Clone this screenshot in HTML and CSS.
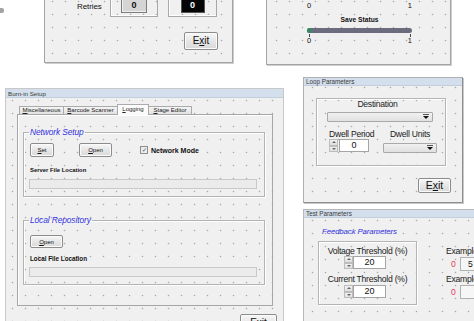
FILE: index.html
```html
<!DOCTYPE html>
<html lang="en">
<head>
    <meta charset="UTF-8">
    <meta name="viewport" content="width=device-width, initial-scale=1.0">
    <title>Burn-in Designer</title>
    <link rel="stylesheet" href="styles.css">
</head>
<body>
    <div class="desk">
        <span class="cursor-bit"></span>

        <!-- retries counters -->
        <div class="win win-counters">
            <div class="counter-row">
                <span class="lbl">Retries</span>
                <div class="frame"><span class="readout">0</span></div>
                <div class="frame frame-wide"><span class="readout readout-dark">0</span></div>
            </div>
            <div class="exit-row">
                <button class="btn btn-exit">E<u>x</u>it</button>
            </div>
        </div>

        <!-- save status gauge -->
        <div class="win win-save">
            <div class="gauge">
                <div class="scale"><span>0</span><span>1</span></div>
                <div class="gauge-title">Save Status</div>
                <div class="bar"><span class="bar-dot"></span></div>
                <div class="ticks"><span></span><span></span></div>
                <div class="scale"><span>0</span><span>1</span></div>
            </div>
        </div>

        <!-- burn-in setup -->
        <div class="win win-burnin">
            <div class="titlebar">Burn-in Setup</div>
            <div class="burnin-body">
                <div class="tabs">
                    <span class="tab tab-misc"><u>M</u>iscellaneous</span>
                    <span class="tab tab-barcode"><u>B</u>arcode Scanner</span>
                    <span class="tab tab-logging active"><u>L</u>ogging</span>
                    <span class="tab tab-stage"><u>S</u>tage Editor</span>
                </div>
                <div class="tab-panel">
                    <fieldset class="group group-network">
                        <legend>Network Setup</legend>
                        <div class="btn-row">
                            <button class="btn btn-set"><u>S</u>et</button>
                            <button class="btn btn-open"><u>O</u>pen</button>
                            <label class="check"><span class="check-box">&#10003;</span>Network Mode</label>
                        </div>
                        <div class="field-lbl lbl-server">Server File Location</div>
                        <div class="textbox"></div>
                    </fieldset>
                    <fieldset class="group group-local">
                        <legend>Local Repository</legend>
                        <button class="btn btn-open btn-local"><u>O</u>pen</button>
                        <div class="field-lbl lbl-local">Local File Location</div>
                        <div class="textbox textbox-local"></div>
                    </fieldset>
                </div>
                <div class="exit-row exit-burnin">
                    <button class="btn btn-exit">E<u>x</u>it</button>
                </div>
            </div>
        </div>

        <!-- loop parameters -->
        <div class="win win-loop">
            <div class="titlebar">Loop Parameters</div>
            <div class="loop-body">
                <div class="box loop-box">
                    <div class="caption dest-lbl">Destination</div>
                    <div class="combo combo-dest"><span class="arrow"></span></div>
                    <div class="dwell-row">
                        <div class="dwell-col">
                            <div class="caption">Dwell Period</div>
                            <div class="spin">
                                <span class="spin-btns"><i class="up"></i><i class="down"></i></span>
                                <span class="spin-val">0</span>
                            </div>
                        </div>
                        <div class="dwell-col dwell-units">
                            <div class="caption">Dwell Units</div>
                            <div class="combo combo-units"><span class="arrow"></span></div>
                        </div>
                    </div>
                </div>
                <div class="exit-row exit-loop">
                    <button class="btn btn-exit">E<u>x</u>it</button>
                </div>
            </div>
        </div>

        <!-- test parameters -->
        <div class="win win-test">
            <div class="titlebar">Test Parameters</div>
            <div class="test-body">
                <div class="feedback-lbl">Feedback Parameters</div>
                <div class="test-row">
                    <div class="box thresh-box">
                        <div class="caption">Voltage Threshold (%)</div>
                        <div class="spin spin-wide">
                            <span class="spin-btns"><i class="up"></i><i class="down"></i></span>
                            <span class="spin-val">20</span>
                        </div>
                        <div class="caption caption-gap">Current Threshold (%)</div>
                        <div class="spin spin-wide">
                            <span class="spin-btns"><i class="up"></i><i class="down"></i></span>
                            <span class="spin-val">20</span>
                        </div>
                    </div>
                    <div class="example-col">
                        <div class="caption">Example</div>
                        <div class="example-line"><span class="red-val">0</span><span class="example-box">5</span></div>
                        <div class="caption caption-gap2">Example</div>
                        <div class="example-line"><span class="red-val">0</span><span class="example-box"></span></div>
                    </div>
                </div>
            </div>
        </div>
    </div>
</body>
</html>
```

FILE: styles.css
```css
/* General Styling */
body {
    margin: 0;
    padding: 0;
    background: #fff;
    font-family: "Liberation Sans", Arial, sans-serif;
    color: #111;
}

.desk {
    position: relative;
    width: 474px;
    height: 321px;
    overflow: hidden;
    background: #fff;
}

.cursor-bit {
    position: absolute;
    left: 0;
    top: 8px;
    width: 4px;
    height: 5px;
    background: #a4a4a4;
    border-radius: 0 2px 2px 0;
}

/* designer windows, placed on a free canvas */
.win {
    position: absolute;
    box-sizing: border-box;
    background-color: #f0f0f0;
    background-image: radial-gradient(circle, #a9a9a9 0.6px, transparent 1.1px);
    background-size: 13px 13px;
    border: 1px solid #b9b9b9;
}

.titlebar {
    background: #d3dfec;
    color: #3a3a3a;
    font-size: 6.3px;
    padding-left: 2px;
    border-bottom: 1px solid #c2cedb;
}

.btn {
    box-sizing: border-box;
    padding: 0;
    border: 1px solid #8c8c8c;
    border-radius: 2px;
    background: linear-gradient(#f7f7f7, #e6e6e6 50%, #d9d9d9);
    font-family: "Liberation Sans", Arial, sans-serif;
    color: #111;
    line-height: 1;
    box-shadow: inset 0 0 0 1px #fbfbfb;
}

.btn-exit {
    width: 34px;
    height: 18px;
    font-size: 10px;
}

.exit-row {
    display: flex;
    justify-content: flex-end;
}

.caption {
    font-size: 8.6px;
    line-height: 8px;
    letter-spacing: -0.25px;
    text-align: center;
    white-space: nowrap;
    color: #1a1a1a;
}

/* Retries window */
.win-counters {
    left: 44px;
    top: -8px;
    width: 189px;
    height: 71px;
    background-position: 1px 2px;
    border-color: #a4a4a4;
    box-shadow: 1px 1px 0 #cfcfcf;
}

.counter-row {
    display: flex;
    align-items: center;
    height: 24px;
    padding-left: 32px;
}

.lbl {
    width: 25px;
    margin-right: 8px;
    font-size: 8px;
    letter-spacing: -0.1px;
    padding-top: 3px;
}

.frame {
    box-sizing: border-box;
    width: 48px;
    height: 24px;
    margin-right: 10px;
    border: 1px solid #a8a8a8;
    border-top: none;
    box-shadow: inset 1px -1px 0 #fff;
    display: flex;
    justify-content: center;
    align-items: flex-end;
    padding-bottom: 3px;
}

.frame-wide {
    width: 49px;
}

.readout {
    box-sizing: border-box;
    width: 26px;
    height: 16px;
    background: #d5d5d5;
    border: 1px solid #7c7c7c;
    border-top: none;
    box-shadow: inset 1px -1px 0 #efefef;
    font-size: 9px;
    font-weight: bold;
    text-align: center;
    line-height: 17px;
}

.readout-dark {
    width: 24px;
    background: #050505;
    color: #fff;
    border-color: #555;
    box-shadow: none;
}

.win-counters .exit-row {
    margin-top: 15px;
    padding-right: 14px;
}

/* Save status window */
.win-save {
    left: 266px;
    top: -8px;
    width: 185px;
    height: 73px;
    background-position: 3px 2px;
    border-color: #a4a4a4;
    box-shadow: 1px 1px 0 #cfcfcf;
}

.gauge {
    width: 105px;
    margin-left: 40px;
    padding-top: 9px;
}

.scale {
    display: flex;
    justify-content: space-between;
    font-size: 7.5px;
    line-height: 8px;
}

.gauge-title {
    margin-top: 6px;
    font-size: 6.7px;
    font-weight: bold;
    line-height: 8px;
    text-align: center;
}

.bar {
    position: relative;
    height: 5px;
    margin-top: 4px;
    background: #6c6c7f;
    border-radius: 3px;
}

.bar-dot {
    position: absolute;
    left: 0;
    top: 0;
    width: 4px;
    height: 5px;
    border-radius: 3px 0 0 3px;
    background: #2e8d5f;
}

.ticks {
    display: flex;
    justify-content: space-between;
    height: 3px;
    margin-top: 1px;
    padding: 0 1px 0 2px;
}

.ticks span {
    width: 1px;
    background: #444;
}

/* Burn-in setup window */
.win-burnin {
    left: 5px;
    top: 88px;
    width: 279px;
    height: 260px;
    background-position: 0 5px;
    border-color: #c8c8c8;
}

.win-burnin .titlebar {
    height: 8px;
    line-height: 9px;
    font-size: 6.2px;
}

.burnin-body {
    padding: 6px 10px 0 11px;
}

.tabs {
    display: flex;
    align-items: flex-end;
    height: 10px;
    padding-left: 2px;
}

.tab {
    box-sizing: border-box;
    height: 8px;
    margin-right: -1px;
    border: 1px solid #ababab;
    border-bottom: none;
    background: linear-gradient(#f4f4f4, #e2e2e2);
    font-size: 6px;
    line-height: 7px;
    text-align: center;
    color: #222;
}

.tab-misc { width: 45px; }
.tab-barcode { width: 55px; }
.tab-logging { width: 32px; }
.tab-stage { width: 44px; }

.tab.active {
    position: relative;
    height: 11px;
    margin-bottom: -1px;
    background: #fbfbfb;
    line-height: 9px;
    z-index: 1;
}

.tab-panel {
    box-sizing: border-box;
    width: 256px;
    height: 192px;
    padding: 12px 0 0 5px;
    border: 1px solid #a6a6a6;
    box-shadow: inset 1px 1px 0 #fff;
}

.group {
    box-sizing: border-box;
    width: 242px;
    margin: 0;
    padding: 0;
    min-width: 0;
    border: 1px solid #b3b3b3;
    box-shadow: inset 1px 1px 0 #fff, 1px 1px 0 #fff;
}

.group legend {
    margin-left: 5px;
    padding: 0 1px;
    font-size: 8.4px;
    line-height: 10px;
    font-style: italic;
    color: #2f2fdc;
    letter-spacing: -0.1px;
}

.btn-row {
    display: flex;
    align-items: center;
    margin-top: 6px;
    padding-left: 6px;
}

.btn-set,
.btn-open {
    height: 14px;
    font-size: 6px;
}

.btn-set {
    width: 24px;
    margin-right: 25px;
}

.btn-open {
    width: 33px;
    margin-right: 28px;
}

.check {
    display: flex;
    align-items: center;
    font-size: 7px;
    font-weight: bold;
}

.check-box {
    box-sizing: border-box;
    width: 8px;
    height: 8px;
    margin-right: 3px;
    border: 1px solid #8e8e8e;
    background: #ececec;
    font-size: 6px;
    line-height: 6px;
    text-align: center;
    color: #4a4a4a;
    font-weight: normal;
}

.field-lbl {
    padding-left: 6px;
    font-weight: bold;
    line-height: 8px;
}

.lbl-server {
    margin-top: 9px;
    font-size: 5.9px;
}

.textbox {
    box-sizing: border-box;
    width: 228px;
    height: 10px;
    margin: 5px 0 7px 5px;
    background: #ebebeb;
    border: 1px solid #c9c9c9;
}

.group-local {
    margin-top: 18px;
}

.btn-local {
    display: block;
    height: 13px;
    margin: 10px 0 0 6px;
}

.lbl-local {
    margin-top: 7px;
    font-size: 6.3px;
}

.textbox-local {
    margin-top: 4px;
}

.exit-burnin {
    margin-top: 8px;
    margin-right: -4px;
}

.exit-burnin .btn-exit {
    width: 37px;
}

/* Loop parameters window */
.win-loop {
    left: 303px;
    top: 77px;
    width: 160px;
    height: 126px;
    background-position: 2px 3px;
    border-color: #b0b0b0;
    border-right-color: #8e8e8e;
    border-bottom-color: #8e8e8e;
    box-shadow: 1px 1px 0 #c9c9c9;
}

.win-loop .titlebar,
.win-test .titlebar {
    height: 7px;
    line-height: 8px;
}

.loop-body {
    padding: 12px 11px 0 12px;
}

.box {
    box-sizing: border-box;
    border: 1px solid #b4b4b4;
    box-shadow: inset 1px 1px 0 #fff, 1px 1px 0 #fff;
}

.loop-box {
    width: 130px;
    height: 68px;
    padding-top: 1px;
}

.dest-lbl {
    padding-right: 7px;
}

.combo {
    position: relative;
    box-sizing: border-box;
    height: 10px;
    background: linear-gradient(#f1f1f1, #e0e0e0);
    border: 1px solid #a9a9a9;
    border-radius: 1px;
}

.combo-dest {
    width: 106px;
    margin: 4px 0 0 10px;
}

.arrow {
    position: absolute;
    right: 3px;
    top: 3px;
    width: 0;
    height: 0;
    border-left: 3px solid transparent;
    border-right: 3px solid transparent;
    border-top: 3px solid #111;
}

.arrow::before {
    content: "";
    position: absolute;
    left: -3px;
    top: -5px;
    width: 6px;
    height: 1px;
    background: #555;
}

.dwell-row {
    display: flex;
    margin-top: 8px;
    padding-left: 12px;
}

.dwell-col {
    width: 42px;
}

.dwell-units {
    width: 54px;
    margin-left: 12px;
}

.dwell-col .spin {
    margin-top: 1px;
}

.combo-units {
    margin-top: 5px;
}

.spin {
    display: flex;
    height: 13px;
}

.spin-btns {
    display: flex;
    flex-direction: column;
    width: 9px;
}

.spin-btns i {
    position: relative;
    flex: 1;
    box-sizing: border-box;
    border: 1px solid #bdbdbd;
    background: linear-gradient(#f2f2f2, #dedede);
}

.spin-btns i::after {
    content: "";
    position: absolute;
    left: 2px;
    top: 1px;
    border-left: 2px solid transparent;
    border-right: 2px solid transparent;
}

.spin-btns .up::after {
    border-bottom: 2px solid #666;
}

.spin-btns .down::after {
    border-top: 2px solid #666;
}

.spin-val {
    box-sizing: border-box;
    width: 30px;
    margin-left: 1px;
    background: #fff;
    border: 1px solid #a5a5a5;
    font-size: 9px;
    line-height: 11px;
    text-align: center;
}

.exit-loop {
    margin-top: 12px;
}

.exit-loop .btn-exit {
    width: 33px;
    height: 15px;
    font-size: 10.5px;
}

/* Test parameters window */
.win-test {
    left: 303px;
    top: 209px;
    width: 190px;
    height: 130px;
    background-position: 2px 4px;
    border-color: #b8b8b8;
}

.test-body {
    padding: 10px 0 0 13px;
}

.feedback-lbl {
    padding-left: 5px;
    font-size: 7.8px;
    line-height: 8px;
    font-style: italic;
    color: #2f2fdc;
    letter-spacing: -0.1px;
}

.test-row {
    display: flex;
    margin-top: 5px;
    margin-left: 1px;
}

.thresh-box {
    width: 99px;
    height: 64px;
    padding-top: 5px;
}

.spin-wide {
    margin: 1px 0 0 25px;
}

.spin-wide .spin-val {
    width: 33px;
    margin-left: 0;
}

.caption-gap {
    margin-top: 6px;
}

.thresh-box .caption-gap + .spin {
    margin-top: 2px;
}

.example-col {
    margin-left: 29px;
    padding-top: 6px;
}

.example-col .caption {
    text-align: left;
}

.example-line {
    display: flex;
    align-items: center;
    margin-top: 2px;
}

.red-val {
    width: 9px;
    padding-left: 5px;
    font-size: 8.6px;
    color: #e33a5c;
}

.example-box {
    box-sizing: border-box;
    width: 30px;
    height: 14px;
    background: #f6f6f6;
    border: 1px solid #b1b1b1;
    font-size: 8.6px;
    line-height: 12px;
    padding-left: 7px;
}

.caption-gap2 {
    margin-top: 4px;
}
```
